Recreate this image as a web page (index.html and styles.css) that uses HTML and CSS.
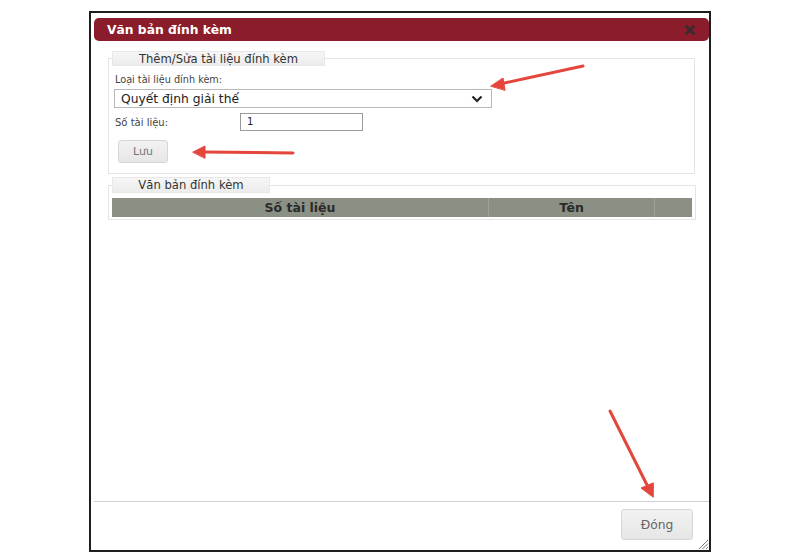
FILE: index.html
```html
<!DOCTYPE html>
<html lang="vi">
<head>
  <meta charset="UTF-8">
  <title>Văn bản đính kèm</title>
  <link rel="stylesheet" href="styles.css">
</head>
<body>

  <!-- DIALOG -->
  <div class="dialog">
    <div class="titlebar">
      <span class="title">Văn bản đính kèm</span>
      <svg class="close-icon" width="10" height="10" viewBox="0 0 10 10">
        <path d="M1.5 1.5 L8.5 8.5 M8.5 1.5 L1.5 8.5" stroke="#3a2b2d" stroke-width="2.6" stroke-linecap="square"/>
      </svg>
    </div>

    <div class="dialog-body">
      <fieldset class="group">
        <legend class="group-legend legend-edit"><span>Thêm/Sửa tài liệu đính kèm</span></legend>
        <div class="field-label">Loại tài liệu đính kèm:</div>
        <div class="select-box">
          <span>Quyết định giải thế</span>
          <svg width="12" height="8" viewBox="0 0 12 8">
            <path d="M1.5 1.5 L6 6 L10.5 1.5" fill="none" stroke="#222" stroke-width="2.2"/>
          </svg>
        </div>
        <div class="form-row">
          <label class="row-label">Số tài liệu:</label>
          <div class="text-input">1</div>
        </div>
        <button class="btn btn-save">Lưu</button>
      </fieldset>

      <fieldset class="group group-files">
        <legend class="group-legend legend-files"><span>Văn bản đính kèm</span></legend>
        <table class="file-table">
          <tr>
            <th class="col-number">Số tài liệu</th>
            <th class="col-name">Tên</th>
            <th class="col-extra"></th>
          </tr>
        </table>
      </fieldset>
    </div>

    <div class="dialog-footer">
      <button class="btn btn-close">Đóng</button>
    </div>

    <svg class="resize-grip" width="12" height="12" viewBox="0 0 12 12">
      <path d="M11 2 L2 11 M11 5.5 L5.5 11 M11 9 L9 11" stroke="#777" stroke-width="1"/>
    </svg>
  </div>

  <!-- ANNOTATION ARROWS -->
  <svg class="annotations" width="800" height="554" viewBox="0 0 800 554">
    <g stroke="#e4453c" stroke-width="3" stroke-linecap="round" fill="#e4453c">
      <line x1="583" y1="66" x2="500" y2="84"/>
      <polygon points="491,86 503,78 505,90" stroke-width="1"/>
      <line x1="293" y1="153" x2="203" y2="152"/>
      <polygon points="193,152 205,146 205,158" stroke-width="1"/>
      <line x1="610" y1="411" x2="648" y2="487"/>
      <polygon points="653,497 641,488 653,483" stroke-width="1"/>
    </g>
  </svg>

</body>
</html>
```

FILE: styles.css
```css
body {
  margin: 0;
  height: 554px;
  overflow: hidden;
  background-color: #ffffff;
  font-family: 'DejaVu Sans', Verdana, sans-serif;
  color: #333;
}

.dialog {
  position: relative;
  box-sizing: border-box;
  width: 622px;
  height: 541px;
  margin: 11px 0 0 89px;
  padding: 5px 0 0 3px;
  border: 2px solid #1e1e1e;
  background: #fff;
  display: flex;
  flex-direction: column;
}

.titlebar {
  height: 23px;
  flex-shrink: 0;
  background-color: #8a1c2b;
  border-radius: 5px;
  display: flex;
  align-items: center;
  justify-content: space-between;
  padding: 0 14px 0 13px;
}

.title {
  color: #fff;
  font-size: 12.3px;
  font-weight: bold;
}

.close-icon {
  margin-top: 1px;
}

.dialog-body {
  flex: 1;
  padding: 10px 14px 0 14px;
}

.group {
  margin: 0;
  padding: 0 3px 10px 3px;
  border: 1px solid #e4e4e4;
}

.group-legend {
  box-sizing: border-box;
  padding: 0;
  height: 15px;
  background: linear-gradient(#f6f6f6, #ececec);
  border: 1px solid #e8e8e8;
  text-align: left;
}

.group-legend span {
  display: block;
  line-height: 14px;
  font-size: 11.6px;
  color: #333;
  text-align: center;
}

.legend-edit {
  width: 213px;
}

.legend-files {
  width: 158px;
  height: 16px;
}

.legend-files span {
  line-height: 15px;
}

.field-label {
  margin: 8px 0 0 3px;
  font-size: 9.7px;
  color: #444;
}

.select-box {
  box-sizing: border-box;
  width: 378px;
  height: 19px;
  margin: 4px 0 0 2px;
  padding: 0 8px 0 6px;
  border: 1px solid #b8b8b8;
  display: flex;
  align-items: center;
  justify-content: space-between;
  font-size: 12.3px;
  color: #222;
}

.form-row {
  display: flex;
  align-items: center;
  margin: 5px 0 0 3px;
}

.row-label {
  width: 125px;
  font-size: 10px;
  color: #444;
}

.text-input {
  box-sizing: border-box;
  width: 123px;
  height: 18px;
  padding-left: 6px;
  border: 1px solid #9a9a9a;
  font-size: 10px;
  line-height: 16px;
  color: #222;
}

.btn {
  box-sizing: border-box;
  background: linear-gradient(#f2f2f2, #e6e6e6);
  border: 1px solid #d6d6d6;
  border-radius: 3px;
  font-family: 'DejaVu Sans', Verdana, sans-serif;
  color: #777;
  cursor: pointer;
}

.btn-save {
  display: block;
  width: 50px;
  height: 23px;
  margin: 9px 0 0 6px;
  font-size: 11px;
}

.group-files {
  margin-top: 3px;
  padding-bottom: 2px;
}

.file-table {
  width: 580px;
  margin-top: 5px;
  border-collapse: collapse;
}

.file-table th {
  height: 19px;
  padding: 0;
  background-color: #8b9085;
  color: #2a2a2a;
  font-size: 12.5px;
  font-weight: bold;
  border-left: 1px solid #9da196;
}

.file-table th:first-child {
  border-left: none;
}

.col-number {
  width: 376px;
}

.col-name {
  width: 165px;
}

.dialog-footer {
  flex-shrink: 0;
  height: 49px;
  box-sizing: border-box;
  border-top: 1px solid #cfcfcf;
  padding: 7px 16px 0 0;
  display: flex;
  justify-content: flex-end;
  align-items: flex-start;
}

.btn-close {
  width: 72px;
  height: 31px;
  font-size: 12.3px;
  color: #666;
}

.resize-grip {
  position: absolute;
  right: 0;
  bottom: 0;
}

.annotations {
  position: absolute;
  top: 0;
  left: 0;
  pointer-events: none;
}
```
